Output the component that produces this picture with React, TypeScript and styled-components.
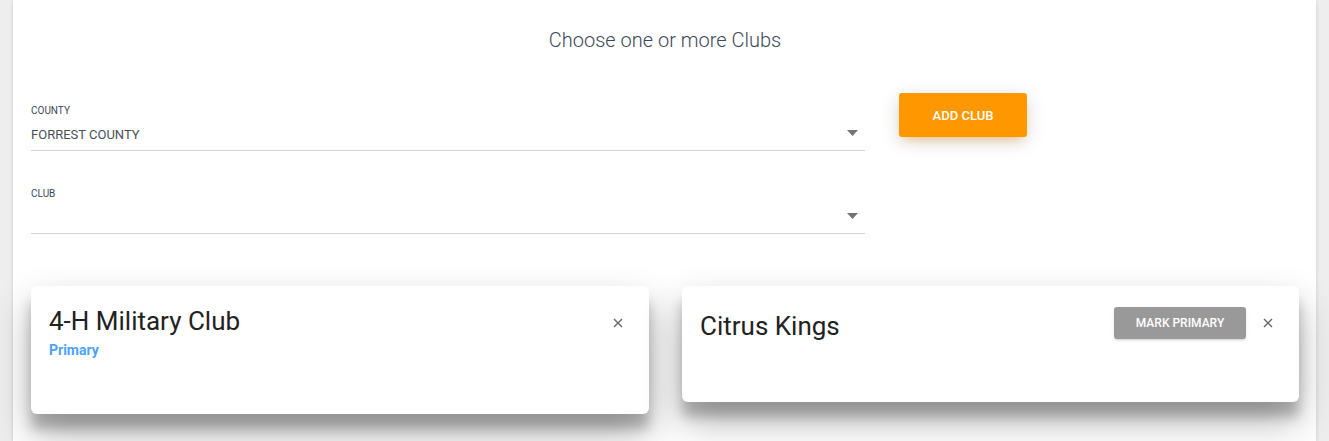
import styled, { createGlobalStyle } from "styled-components";

const GlobalStyle = createGlobalStyle`
  html, body {
    margin: 0;
    padding: 0;
    background: #eeeeee;
    font-family: Roboto, "Helvetica Neue", Arial, sans-serif;
  }
`;

const clubs = [
  { name: "4-H Military Club", primary: true },
  { name: "Citrus Kings", primary: false },
];

const CloseIcon = () => (
  <svg width="10" height="10" viewBox="0 0 10 10">
    <path d="M1 1 L9 9 M9 1 L1 9" stroke="#666" strokeWidth="1.4" fill="none" />
  </svg>
);

const Arrow = () => (
  <ArrowIcon width="11" height="6" viewBox="0 0 11 6">
    <path d="M0 0 H11 L5.5 6 Z" fill="#757575" />
  </ArrowIcon>
);

const SelectField = ({ label, value }: { label: string; value?: string }) => (
  <Field>
    <FieldLabel>{label}</FieldLabel>
    <FieldValue>
      <span>{value}</span>
      <Arrow />
    </FieldValue>
  </Field>
);

const App = () => {
  return (
    <Page>
      <GlobalStyle />
      <Panel>
        <Title>Choose one or more Clubs</Title>
        <FormRow>
          <Fields>
            <SelectField label="COUNTY" value="FORREST COUNTY" />
            <SelectField label="CLUB" />
          </Fields>
          <AddButton>ADD CLUB</AddButton>
        </FormRow>
        <CardGrid>
          {clubs.map((club) => (
            <Card key={club.name}>
              <CardHeader>
                <CardTitle $withAction={!club.primary}>{club.name}</CardTitle>
                <Actions>
                  {!club.primary && <MarkButton>MARK PRIMARY</MarkButton>}
                  <IconButton>
                    <CloseIcon />
                  </IconButton>
                </Actions>
              </CardHeader>
              <CardBody>{club.primary && <PrimaryTag>Primary</PrimaryTag>}</CardBody>
            </Card>
          ))}
        </CardGrid>
      </Panel>
    </Page>
  );
};

const Page = styled.div`
  width: 100%;
  height: 441px;
  overflow: hidden;
  padding: 0 13px;
  box-sizing: border-box;
`;

const Panel = styled.div`
  background: #ffffff;
  height: 100%;
  box-sizing: border-box;
  padding: 28px 17px 0 18px;
  box-shadow: 0 1px 4px 0 rgba(0, 0, 0, 0.14);
`;

const Title = styled.div`
  text-align: center;
  font-size: 20px;
  font-weight: 300;
  line-height: 24px;
  color: #3c4858;
`;

const FormRow = styled.div`
  display: flex;
  align-items: flex-start;
  gap: 34px;
  margin-top: 41px;
`;

const Fields = styled.div`
  width: 834px;
  padding-top: 12px;
  display: flex;
  flex-direction: column;
  gap: 37px;
`;

const Field = styled.div`
  display: flex;
  flex-direction: column;
`;

const FieldLabel = styled.div`
  font-size: 10px;
  line-height: 12px;
  color: #3c4858;
`;

const FieldValue = styled.div`
  display: flex;
  align-items: center;
  justify-content: space-between;
  height: 23px;
  margin-top: 6px;
  padding: 0 7px 4px 0;
  border-bottom: 1px solid #d2d2d2;
  font-size: 13px;
  color: #495057;
`;

const ArrowIcon = styled.svg`
  margin-bottom: 4px;
`;

const AddButton = styled.button`
  width: 128px;
  height: 44px;
  border: none;
  border-radius: 3px;
  background: #ff9800;
  color: #ffffff;
  font-family: Roboto, Arial, sans-serif;
  font-size: 13px;
  font-weight: 500;
  box-shadow: 0 4px 20px 0 rgba(0, 0, 0, 0.14),
    0 7px 10px -5px rgba(255, 152, 0, 0.4);
`;

const CardGrid = styled.div`
  display: grid;
  grid-template-columns: 618px 617px;
  column-gap: 33px;
  align-items: start;
  margin-top: 52px;
`;

const Card = styled.div`
  background: #ffffff;
  border-radius: 6px;
  padding: 20px 19px 54px 18px;
  box-shadow: 0 19px 38px rgba(0, 0, 0, 0.3), 0 15px 12px rgba(0, 0, 0, 0.22);
`;

const CardHeader = styled.div`
  display: flex;
  align-items: flex-start;
  justify-content: space-between;
`;

const CardTitle = styled.div<{ $withAction?: boolean }>`
  font-size: 26px;
  line-height: 30px;
  color: #222222;
  margin-top: ${({ $withAction }) => ($withAction ? "5px" : "0")};
`;

const Actions = styled.div`
  display: flex;
  align-items: center;
  gap: 10px;
  margin-top: 1px;
`;

const MarkButton = styled.button`
  width: 132px;
  height: 32px;
  border: none;
  border-radius: 3px;
  background: #999999;
  color: #ffffff;
  font-family: Roboto, Arial, sans-serif;
  font-size: 12px;
  font-weight: 500;
  box-shadow: 0 2px 2px 0 rgba(153, 153, 153, 0.14),
    0 3px 1px -2px rgba(153, 153, 153, 0.2),
    0 1px 5px 0 rgba(153, 153, 153, 0.12);
`;

const IconButton = styled.div`
  width: 24px;
  height: 32px;
  display: flex;
  align-items: center;
  justify-content: center;
`;

const CardBody = styled.div`
  min-height: 7px;
`;

const PrimaryTag = styled.div`
  margin-top: 1px;
  font-size: 14px;
  line-height: 20px;
  font-weight: 700;
  color: #4ba3f3;
`;

export default App;
